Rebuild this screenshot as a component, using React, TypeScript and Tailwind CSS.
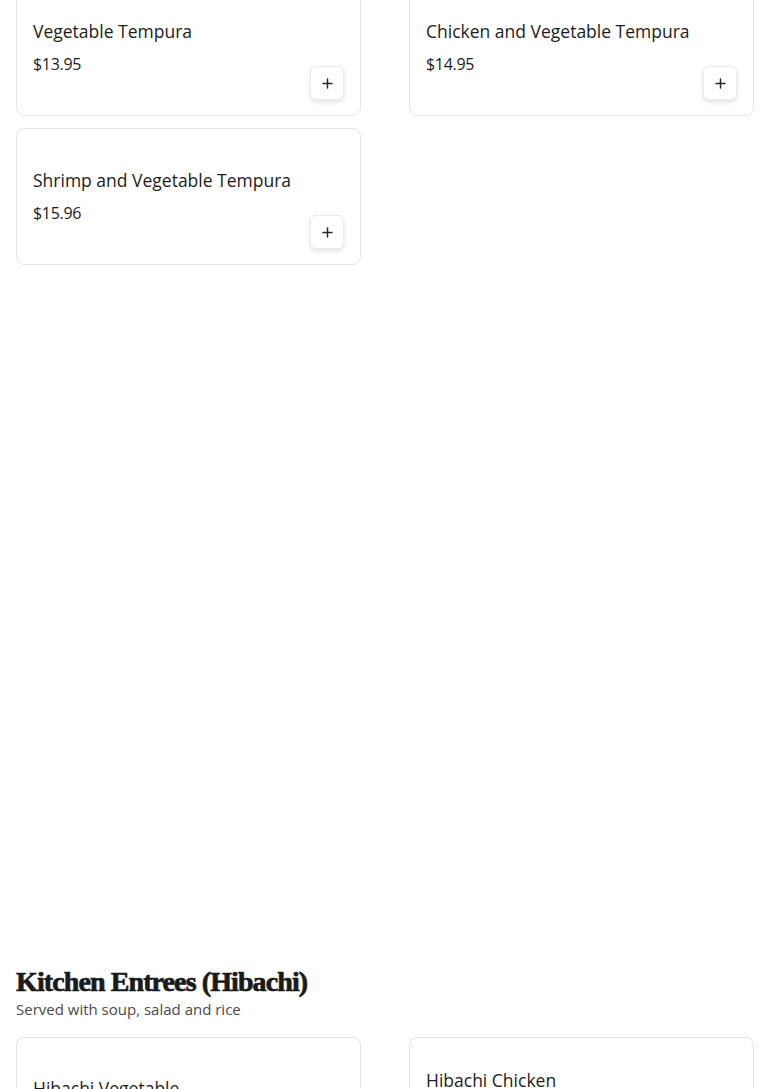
function PlusButton() {
  return (
    <button className="w-[34px] h-[34px] flex items-center justify-center rounded-md bg-white border border-[#ececec] shadow-[0_2px_5px_rgba(0,0,0,0.12)]">
      <svg width="11" height="11" viewBox="0 0 11 11" fill="none" stroke="#2a2a2a" strokeWidth="1.5" strokeLinecap="round">
        <path d="M5.5 1v9M1 5.5h9" />
      </svg>
    </button>
  );
}

function ItemCard({ name, price }: { name: string; price: string }) {
  return (
    <div className="flex flex-col rounded-lg border border-[#e4e4e4] bg-white pt-[39px] px-4 pb-[15px]">
      <div className="text-[17.5px] leading-6 text-[#1c1c1c]">{name}</div>
      <div className="mt-[11px] text-[16px] leading-5 tracking-[-0.3px] text-[#1c1c1c]">{price}</div>
      <div className="flex justify-end mt-[-8px]">
        <PlusButton />
      </div>
    </div>
  );
}

function PartialCard({ name, pt }: { name: string; pt: string }) {
  return (
    <div className={`rounded-t-lg border border-b-0 border-[#e4e4e4] bg-white px-4 h-[60px] ${pt}`}>
      <div className="text-[17.5px] leading-6 text-[#1c1c1c]">{name}</div>
    </div>
  );
}

export default function App() {
  return (
    <div className="bg-white min-h-[1089px] h-[1089px] overflow-hidden px-4" style={{ fontFamily: '"Open Sans", sans-serif' }}>
      <div className="mt-[-21px] grid grid-cols-2 gap-x-12 gap-y-3">
        <ItemCard name="Vegetable Tempura" price="$13.95" />
        <ItemCard name="Chicken and Vegetable Tempura" price="$14.95" />
        <ItemCard name="Shrimp and Vegetable Tempura" price="$15.96" />
      </div>
      <div className="mt-[700px]">
        <h2
          className="text-[28px] leading-[34px] font-bold tracking-[-0.9px] text-[#1a1a1a] [-webkit-text-stroke:0.7px_#1a1a1a]"
          style={{ fontFamily: '"Liberation Serif", serif' }}
        >
          Kitchen Entrees (Hibachi)
        </h2>
        <p className="text-[15px] leading-5 text-[#4a4a4a]">Served with soup, salad and rice</p>
        <div className="mt-[18px] grid grid-cols-2 gap-x-12">
          <PartialCard name="Hibachi Vegetable" pt="pt-[38px]" />
          <PartialCard name="Hibachi Chicken" pt="pt-[30px]" />
        </div>
      </div>
    </div>
  );
}
